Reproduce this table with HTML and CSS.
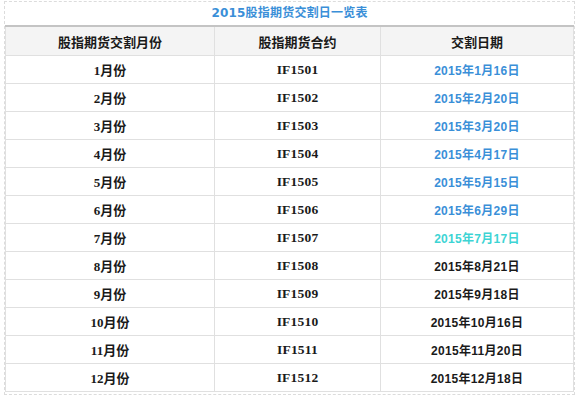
FILE: index.html
```html
<!DOCTYPE html>
<html lang="zh-CN">
<head>
<meta charset="utf-8">
<title>2015股指期货交割日一览表</title>
<link rel="stylesheet" href="styles.css">
</head>
<body>
<div class="box">
  <div class="title">2015股指期货交割日一览表</div>
  <table class="grid">
    <colgroup><col class="c1"><col class="c2"><col class="c3"></colgroup>
    <thead>
      <tr><th>股指期货交割月份</th><th>股指期货合约</th><th>交割日期</th></tr>
    </thead>
    <tbody>
      <tr><td>1月份</td><td class="code">IF1501</td><td class="date blue">2015年1月16日</td></tr>
      <tr><td>2月份</td><td class="code">IF1502</td><td class="date blue">2015年2月20日</td></tr>
      <tr><td>3月份</td><td class="code">IF1503</td><td class="date blue">2015年3月20日</td></tr>
      <tr><td>4月份</td><td class="code">IF1504</td><td class="date blue">2015年4月17日</td></tr>
      <tr><td>5月份</td><td class="code">IF1505</td><td class="date blue">2015年5月15日</td></tr>
      <tr><td>6月份</td><td class="code">IF1506</td><td class="date blue">2015年6月29日</td></tr>
      <tr><td>7月份</td><td class="code">IF1507</td><td class="date cyan">2015年7月17日</td></tr>
      <tr><td>8月份</td><td class="code">IF1508</td><td class="date">2015年8月21日</td></tr>
      <tr><td>9月份</td><td class="code">IF1509</td><td class="date">2015年9月18日</td></tr>
      <tr><td>10月份</td><td class="code">IF1510</td><td class="date">2015年10月16日</td></tr>
      <tr><td>11月份</td><td class="code">IF1511</td><td class="date">2015年11月20日</td></tr>
      <tr><td>12月份</td><td class="code">IF1512</td><td class="date">2015年12月18日</td></tr>
    </tbody>
  </table>
</div>
</body>
</html>
```
FILE: styles.css
```css
html, body {
  margin: 0;
  padding: 0;
  background: #ffffff;
}
body {
  font-family: "Liberation Serif", "Noto Sans CJK SC", serif;
  color: #1a1a1a;
}
.box {
  margin: 1px 0 0 4px;
  width: 569px;
  border: 1px dashed #dcdcdc;
  padding-bottom: 2px;
}
.title {
  height: 23px;
  line-height: 23px;
  text-align: center;
  font-family: "DejaVu Sans", "Noto Sans CJK SC", sans-serif;
  font-size: 12px;
  font-weight: bold;
  color: #3a8fd8;
  letter-spacing: 0.2px;
}
.grid {
  width: 568px;
  border-collapse: collapse;
  table-layout: fixed;
}
.c1 { width: 209px; }
.c2 { width: 166px; }
.c3 { width: 193px; }
.grid th, .grid td {
  border: 1px solid #e0e0e0;
  height: 27px;
  padding: 0;
  text-align: center;
  font-size: 13px;
  font-weight: bold;
  font-family: "Liberation Serif", "Noto Sans CJK SC", serif;
}
.grid th {
  height: 28px;
  background: #f4f4f4;
  border-top: 2px solid #c4c4c4;
  font-family: "Noto Sans CJK SC", sans-serif;
}
.grid td.code {
  font-size: 13.5px;
  letter-spacing: 0.2px;
}
.grid td.date {
  font-family: "Liberation Sans", "Noto Sans CJK SC", sans-serif;
  font-size: 12px;
  letter-spacing: 0.3px;
}
.blue { color: #3a8fd8; }
.cyan { color: #3dd4d4; }
```
